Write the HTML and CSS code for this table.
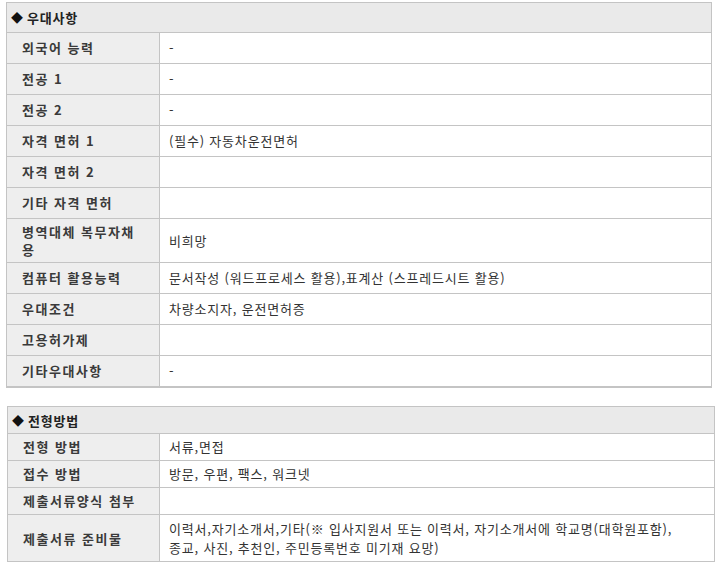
FILE: index.html
```html
<!DOCTYPE html>
<html lang="ko">
<head>
<meta charset="utf-8">
<link rel="stylesheet" href="styles.css">
</head>
<body>
<section class="info info-pref">
  <div class="head"><span class="dia">◆</span> 우대사항</div>
  <div class="row"><div class="lbl">외국어 능력</div><div class="val">-</div></div>
  <div class="row"><div class="lbl">전공 1</div><div class="val">-</div></div>
  <div class="row"><div class="lbl">전공 2</div><div class="val">-</div></div>
  <div class="row"><div class="lbl">자격 면허 1</div><div class="val">(필수) 자동차운전면허</div></div>
  <div class="row"><div class="lbl">자격 면허 2</div><div class="val"></div></div>
  <div class="row"><div class="lbl">기타 자격 면허</div><div class="val"></div></div>
  <div class="row tall"><div class="lbl">병역대체 복무자채용</div><div class="val">비희망</div></div>
  <div class="row"><div class="lbl">컴퓨터 활용능력</div><div class="val">문서작성 (워드프로세스 활용),표계산 (스프레드시트 활용)</div></div>
  <div class="row"><div class="lbl">우대조건</div><div class="val">차량소지자, 운전면허증</div></div>
  <div class="row"><div class="lbl">고용허가제</div><div class="val"></div></div>
  <div class="row"><div class="lbl">기타우대사항</div><div class="val">-</div></div>
</section>

<section class="info info-sel">
  <div class="head"><span class="dia">◆</span> 전형방법</div>
  <div class="row"><div class="lbl">전형 방법</div><div class="val">서류,면접</div></div>
  <div class="row"><div class="lbl">접수 방법</div><div class="val">방문, 우편, 팩스, 워크넷</div></div>
  <div class="row"><div class="lbl">제출서류양식 첨부</div><div class="val"></div></div>
  <div class="row tall"><div class="lbl">제출서류 준비물</div><div class="val">이력서,자기소개서,기타(※ 입사지원서 또는 이력서, 자기소개서에 학교명(대학원포함),<br>종교, 사진, 추천인, 주민등록번호 미기재 요망)</div></div>
</section>
</body>
</html>
```

FILE: styles.css
```css
html, body {
  margin: 0;
  padding: 0;
  background: #ffffff;
}

body {
  font-family: "Noto Sans CJK KR", "Noto Sans", sans-serif;
  font-size: 13px;
  color: #333333;
}

.info {
  border: 1px solid #c4c4c4;
  box-sizing: border-box;
}

.info-pref {
  margin: 2px 0 0 6px;
  width: 706px;
  border-bottom-width: 2px;
  --row-h: 30px;
  --tall-h: 43px;
  --head-h: 29px;
}

.info-sel {
  margin: 18px 0 0 7px;
  width: 708px;
  --row-h: 26px;
  --tall-h: 46px;
  --head-h: 26px;
}

.head {
  height: var(--head-h);
  display: flex;
  align-items: center;
  gap: 4px;
  padding-left: 4px;
  background: #eaeaea;
  border-bottom: 1px solid #c4c4c4;
  font-weight: 700;
  color: #222222;
  letter-spacing: 0.8px;
}

.dia {
  font-size: 12px;
  color: #111111;
  letter-spacing: 0;
}

.row {
  display: grid;
  grid-template-columns: 153px 1fr;
  min-height: var(--row-h);
  border-bottom: 1px solid #c4c4c4;
  line-height: 18px;
}

.info-sel .row {
  grid-template-columns: 152px 1fr;
}

.row:last-child {
  border-bottom: 0;
}

.row.tall {
  min-height: var(--tall-h);
}

.info-sel .row.tall {
  line-height: 19px;
}

.lbl {
  display: flex;
  align-items: center;
  background: #eeeeee;
  border-right: 1px solid #c4c4c4;
  font-weight: 700;
  color: #3a3a3a;
  letter-spacing: 1.5px;
  padding: 0 12px 0 15px;
  overflow-wrap: anywhere;
}

.val {
  display: flex;
  align-items: center;
  padding: 0 6px 0 9px;
  color: #333333;
  letter-spacing: 0.8px;
  white-space: nowrap;
}
```
